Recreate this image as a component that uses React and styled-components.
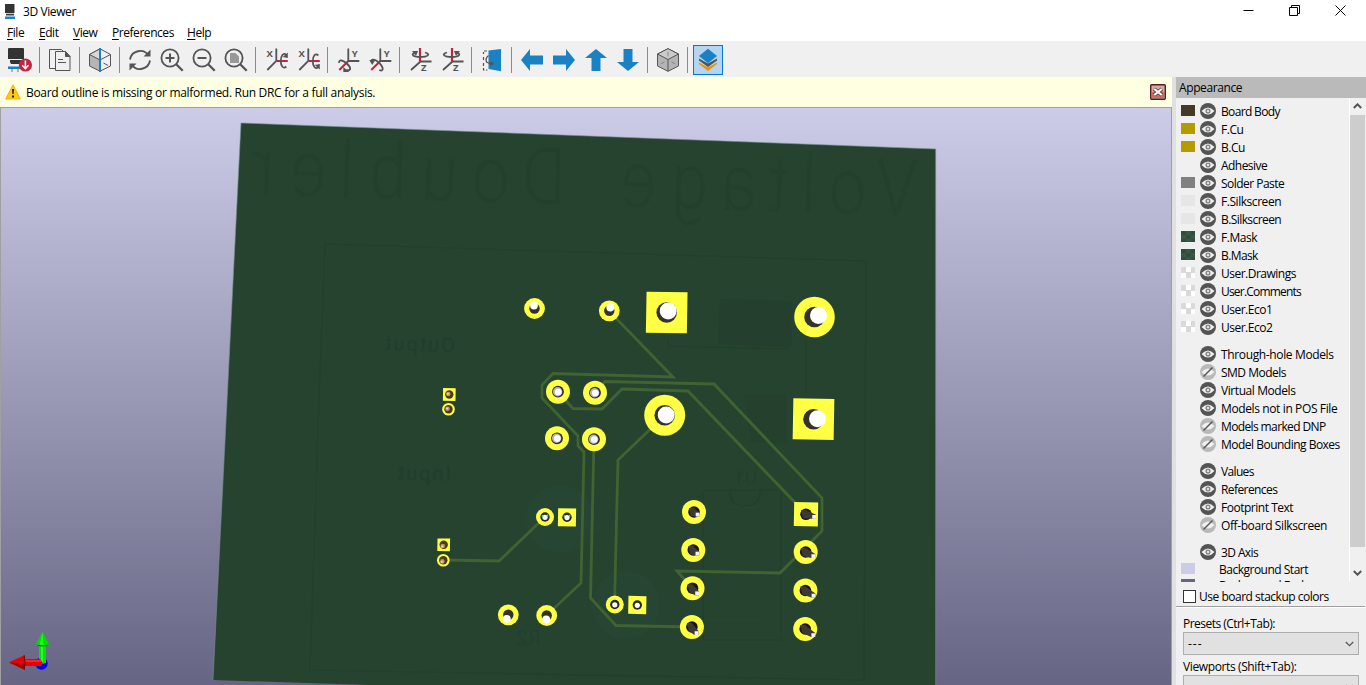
import React from "react";
import styled, { createGlobalStyle } from "styled-components";

const Global = createGlobalStyle`
  * { box-sizing: border-box; }
  html, body { margin: 0; padding: 0; overflow: hidden; }
  body { font-family: "Open Sans", "Noto Sans", sans-serif; font-size: 12px; color: #000; }
`;

const Window = styled.div`
  width: 1366px;
  height: 685px;
  display: flex;
  flex-direction: column;
  background: #fff;
  overflow: hidden;
`;
const TitleBar = styled.header`
  height: 23px;
  flex: none;
  display: flex;
  align-items: center;
  padding: 0 19px 0 4px;
`;
const Title = styled.span`
  flex: 1;
  margin-left: 6px;
  line-height: 23px;
  letter-spacing: -0.4px;
`;
const WindowButtons = styled.div`
  display: flex;
  gap: 33px;
  padding-bottom: 3px;
`;
const MenuBar = styled.nav`
  height: 18px;
  flex: none;
  display: flex;
  padding-left: 7px;
  line-height: 19px;
`;
const MenuItem = styled.span`
  width: ${(p) => p.$w}px;
  white-space: nowrap;
  letter-spacing: -0.45px;
`;
const Key = styled.u`
  text-underline-offset: 2px;
`;
const ToolBar = styled.div`
  height: 36px;
  flex: none;
  display: flex;
  align-items: center;
  padding: 2px 0 0 4px;
  background: #f0f0f0;
`;
const Tool = styled.div`
  width: 30px;
  height: 30px;
  margin: 0 1px;
  display: flex;
  align-items: center;
  justify-content: center;
  border: 1px solid ${(p) => (p.$on ? "#0078d7" : "transparent")};
  background: ${(p) => (p.$on ? "#b3d5f2" : "transparent")};
  svg { overflow: visible; }
`;
const Separator = styled.div`
  width: 1px;
  height: 26px;
  margin: 0 4px 0 3px;
  background: #8c8c8c;
`;
const Main = styled.div`
  flex: 1;
  min-height: 0;
  display: flex;
`;
const Viewer = styled.main`
  width: 1172px;
  display: flex;
  flex-direction: column;
`;
const InfoBar = styled.div`
  height: 30px;
  width: 1171px;
  flex: none;
  display: flex;
  align-items: center;
  background: #ffffe1;
  padding: 0 5px 0 5px;
`;
const InfoText = styled.span`
  flex: 1;
  margin-left: 5px;
  letter-spacing: -0.3px;
`;
const Viewport = styled.div`
  flex: 1;
  min-height: 0;
  border: 1px solid #a0a0a0;
  border-bottom: 0;
  background: linear-gradient(#cccce8, #666684);
  svg { display: block; }
`;
const Side = styled.aside`
  flex: 1;
  border-left: 4px solid #e0e0e0;
  background: #f0f0f0;
  display: flex;
  flex-direction: column;
`;
const SideTitle = styled.div`
  height: 21px;
  flex: none;
  background: #bababa;
  padding-left: 3px;
  line-height: 21px;
  letter-spacing: -0.4px;
`;
const ListArea = styled.div`
  height: 484px;
  flex: none;
  display: flex;
`;
const List = styled.div`
  width: 173px;
  height: 484px;
  overflow: hidden;
  padding: 4px 0 0 5px;
`;
const Row = styled.div`
  height: ${(p) => (p.$plain ? 16 : 18)}px;
  margin-top: ${(p) => (p.$gap ? 9 : 0)}px;
  display: flex;
  align-items: center;
  white-space: nowrap;
`;
const Swatch = styled.i`
  width: 14px;
  height: 11px;
  flex: none;
  margin: 0 5px 1px 0;
`;
const RowLabel = styled.span`
  margin-left: ${(p) => (p.$plain ? 19 : 5)}px;
  padding-top: 1px;
  line-height: 16px;
  letter-spacing: ${(p) => p.$ls ?? -0.45}px;
`;
const ScrollBar = styled.div`
  width: 16px;
  border-left: 1px solid #fff;
  display: flex;
  flex-direction: column;
  justify-content: space-between;
  align-items: center;
  background: #f0f0f0;
`;
const ScrollArrow = styled.div`
  height: ${(p) => p.$h}px;
  display: flex;
  align-items: flex-end;
  padding-bottom: 6px;
`;
const Thumb = styled.div`
  width: 15px;
  height: 432px;
  background: #cdcdcd;
`;
const Stackup = styled.div`
  height: 24px;
  flex: none;
  display: flex;
  align-items: center;
  gap: 3px;
  padding: 5px 0 0 7px;
  letter-spacing: -0.48px;
`;
const Check = styled.i`
  width: 13px;
  height: 13px;
  border: 1px solid #333;
  background: #fff;
`;
const Rule = styled.div`
  height: 2px;
  flex: none;
  margin-right: 1px;
  border-top: 1px solid #a0a0a0;
  background: #fff;
`;
const FieldLabel = styled.div`
  height: ${(p) => p.$h}px;
  flex: none;
  padding: ${(p) => p.$top}px 0 0 7px;
  line-height: 16px;
  letter-spacing: ${(p) => p.$ls}px;
`;
const Select = styled.div`
  height: 23px;
  flex: none;
  margin: 0 7px;
  border: 1px solid #adadad;
  background: #e1e1e1;
  display: flex;
  align-items: center;
  justify-content: space-between;
  padding: 0 4px;
  letter-spacing: 1px;
`;

const INK = "#545454";
const RED = "#bf2641";
const BLUE = "#1a81c4";

const Svg = ({ s = 24, left = 0, children, ...r }) => (
  <svg width={s} height={s} viewBox={`${-left} 0 24 24`} fill="none" stroke={INK} strokeWidth="1.8" {...r}>
    {children}
  </svg>
);

const AppIcon = () => (
  <svg width="13" height="16" viewBox="0 0 13 16">
    <path d="M1 0h9.500v9H1z" fill="#333" />
    <path d="M2 9.700h8v1.800H2z" fill="#3d3d3d" />
    <path d="M1 12.500h10v2.500H1z" fill={BLUE} />
  </svg>
);
const Reload = () => (
  <Svg stroke="none">
    <path d="M0 0.500Q0 0 1 0h14q1 0 1 1v10H0z" fill="#333" />
    <path d="M2 12h13v2l-1 2H3l-1-2z" fill="#333" />
    <path d="M0 17h16v1H0z" fill="#eee" />
    <path d="M0 18.500h12V21H0z" fill={BLUE} />
    <path d="M4 21v3M10 21v3" stroke="#aaa" />
    <circle cx="17.400" cy="17" r="6.600" fill={RED} />
    <path d="M17.400 12.600v7.600M14.200 17.300l3.200 3.300 3.200-3.300" stroke="#fff" strokeWidth="1.500" />
  </Svg>
);
const Copy = () => (
  <Svg strokeWidth="1" left={1}>
    <path d="M6.500 20.500h-6v-19h12l2 2" />
    <path d="M6.500 3.500h10l4.500 5v14h-14.500z" />
    <path d="M16.500 3.500v5h4.500z" fill={INK} />
    <path d="M9 11.500h5M9 14.500h8" strokeWidth="1.200" />
  </Svg>
);
const Raytrace = () => (
  <Svg strokeWidth="1">
    <path d="M12 .8 1.500 6.500v11.500L12 23.200z" fill="#b5b5b5" />
    <path d="M12 .8 1.500 6.500 12 12z" fill="#d8d8d8" />
    <path d="M12 .8l10.500 5.700v11.500L12 23.200M12 12l10.500-5.500M15.500 15l4.500 2.500" />
    <path d="M12 0v24" stroke={BLUE} strokeWidth="2" />
  </Svg>
);
const Refresh = () => (
  <Svg>
    <path d="M2 11.500A10.200 10.200 0 0 1 20.500 7.500M22 12.500A10.200 10.200 0 0 1 3.500 16.500" />
    <path d="M22.500 1.500v7h-7zM1.500 22.500v-7h7z" fill={INK} stroke="none" />
  </Svg>
);
const Lens = ({ kind }) => (
  <Svg>
    <circle cx="10" cy="10" r="8.600" />
    <path d="M16.200 16.200l6.500 6.500" strokeWidth="2.300" />
    {kind === "page" ? (
      <path d="M6 5h5.500l3.500 3.500V15H6z" fill="#999" stroke="none" />
    ) : (
      <path d={kind === "in" ? "M5.500 10h9M10 5.500v9" : "M5.500 10h9"} strokeWidth="2" />
    )}
  </Svg>
);
const AxisLetter = ({ x, y, children }) => (
  <text x={x} y={y} fill={INK} stroke="none" fontFamily="Open Sans" fontWeight="700" fontSize="9.500">
    {children}
  </text>
);
const RotX = ({ flip }) => (
  <Svg left={1.3}>
    <path d="M11 0.500v12.500L2 22" />
    <path d="M11 13h11.500" stroke={RED} strokeWidth="2" />
    <AxisLetter x="1.300" y="9">X</AxisLetter>
    <g transform={flip ? "matrix(1 0 0 -1 0 26)" : undefined}>
      <path d="M21 7C18 4 15.500 8 15.500 13s2.500 8.500 5.500 5.500" />
      <path d="M17.500 9l5 1V4.500z" fill={INK} stroke="none" />
    </g>
  </Svg>
);
const RotY = ({ flip }) => (
  <Svg left={1.300}>
    <path d="M11 0.500v12.500h11" />
    <path d="M11 13l-9 9" stroke={RED} strokeWidth="2" />
    <AxisLetter x="14.500" y="9">Y</AxisLetter>
    <path d={flip ? "M3 15c-3-4 2-5 7 0s4 9 0 7" : "M2 15c-1-4 4-3 8 1s4 7-1 6"} />
    <path d={flip ? "M0 12h6l-3 5z" : "M6 19v5h6z"} fill={INK} stroke="none" />
  </Svg>
);
const RotZ = ({ flip }) => (
  <Svg left={1}>
    <path d="M22.500 13.500h-11L2 22" />
    <path d="M11 0v13.500" stroke={RED} strokeWidth="2.200" />
    <AxisLetter x="12" y="23.300">Z</AxisLetter>
    <g transform={flip ? "matrix(-1 0 0 1 22 0)" : undefined}>
      <path d="M6 4.500C2 6 3 9 11 9s11-3 5-4.500" />
      <path d="M3 3l6 0-2 5z" fill={INK} stroke="none" />
    </g>
  </Svg>
);
const Flip = () => (
  <Svg left={1}>
    <path d="M6 3H2.500v3M2.500 9v3M2.500 15v3M2.500 20v2h4" strokeDasharray="3 1.500" strokeWidth="1.200" />
    <path d="M7.500 2.500 20 1v22.200L7.500 21z" fill={BLUE} stroke="none" />
    <path d="M7.500 7.500q-3.500 3-2 6.500 2.500 2 7 2" strokeWidth="1.300" />
    <path d="M9 13.500l4 1.500-4 3z" fill={INK} stroke="none" />
  </Svg>
);
const Arrow = ({ turn }) => (
  <Svg stroke="none">
    <path d="M1 12 10 1v6.500h13v9H10V23z" fill={BLUE} transform={`rotate(${turn} 12 12)`} />
  </Svg>
);
const Cube = () => (
  <Svg strokeWidth="1">
    <path d="M12 .7 22.500 6v12L12 23.300 1.500 18V6z" fill="#b4b4b4" />
    <path d="M12 .7 22.500 6 12 11.500 1.500 6z" fill="#cbcbcb" />
    <path d="M12 11.500v11.800" />
    <path d="M12 3.500v5M4.500 16l4-2M19.500 16l-4-2" stroke="#888" />
  </Svg>
);
const Layers = () => (
  <Svg stroke="none">
    <path d="M3 14.500l9 5 9-5v1.500L12 23l-9-7z" fill="#f29100" />
    <path d="M3 10.500l9 5 9-5v2L12 19l-9-6.500z" fill={INK} />
    <path d="M12 .8 21 8 12 15.200 3 8z" fill={BLUE} />
  </Svg>
);
const Eye = ({ off }) => (
  <svg width="16" height="16" viewBox="0 0 16 16">
    <circle cx="8" cy="8" r="8" fill={off ? "#b9b9b9" : INK} />
    <path d="M1.500 8Q8 0.800 14.500 8 8 15.200 1.500 8z" fill="#f0f0f0" />
    {off ? (
      <path d="M3.500 12.500l9-9" stroke={INK} strokeWidth="1.400" />
    ) : (
      <circle cx="8" cy="8" r="1.900" fill="#e0e0e0" stroke="#808080" strokeWidth="1.300" />
    )}
  </svg>
);
const Chevron = ({ up }) => (
  <svg width="9" height="6" viewBox="0 0 9 6" fill="none" stroke="#555" strokeWidth={up === undefined ? 1.2 : 2}>
    <path d={up ? "M.8 5 4.500 1.300 8.200 5" : "M.8 1 4.500 4.700 8.200 1"} />
  </svg>
);
const Warning = () => (
  <svg width="16" height="16" viewBox="0 0 16 16">
    <path d="M8 .8 15.300 15H.7z" fill="#fcc81c" stroke="#f5b400" strokeLinejoin="round" />
    <path d="M7 5h2l-.4 5H7.400zM7 11.500h2v2H7z" fill="#222" />
  </svg>
);
const CloseInfo = () => (
  <svg width="16" height="16" viewBox="0 0 16 16">
    <rect x=".7" y=".7" width="14.600" height="14.600" rx="1" fill="#e3a49b" stroke="#4d2024" strokeWidth="1.400" />
    <path d="M2 8h12v6H2z" fill="#cf6c60" />
    <path d="M4 5l8 6M12 5l-8 6" stroke="#5b4545" strokeWidth="4" />
    <path d="M4.300 5l7.400 6M11.700 5l-7.400 6" stroke="#fff" strokeWidth="2.200" />
  </svg>
);

const TOOLS = [
  <Reload />, null, <Copy />, null, <Raytrace />, null,
  <Refresh />, <Lens kind="in" />, <Lens kind="out" />, <Lens kind="page" />, null,
  <RotX />, <RotX flip />, null, <RotY />, <RotY flip />, null, <RotZ />, <RotZ flip />, null,
  <Flip />, null, <Arrow turn={0} />, <Arrow turn={180} />, <Arrow turn={90} />, <Arrow turn={270} />, null,
  <Cube />, null, <Layers />,
];

const SILK = [
  ["V", 896], ["o", 847], ["l", 808], ["t", 777], ["a", 738], ["g", 689], ["e", 638],
  ["D", 543], ["o", 490], ["u", 439], ["b", 387], ["l", 346], ["e", 308], ["r", 262],
];
const TRACES = [
  "609,311 673,377 553,373.500 542,385 542,398 578,436 578,446 584,452 581,583 547,615",
  "558,392 573,408.500 602,409 622,389 688,391 806,514",
  "595,393 605,381.500 714,384 822,498 822,531 780,573 677,571 692,588",
  "594,439 590.500,598 616,625.500 692,627",
  "665,415 618,460 614.500,604",
  "545,517 499,561 443,560",
];

const Pad = ({ x, y, r, sq, children }) => (
  <g transform={`translate(${x} ${y})`}>
    {sq ? (
      <rect x={-r} y={-r} width={2 * r} height={2 * r} fill="#ffff44" transform="rotate(1)" />
    ) : (
      <circle r={r} fill="#ffff44" />
    )}
    {children}
  </g>
);
const BigPad = ({ dx, dy = -1.5, ...p }) => (
  <Pad {...p}>
    <circle r="10.300" fill="#343231" />
    <circle r="8.500" fill="#fff" cx={dx} cy={dy} />
  </Pad>
);
const ResistorPad = ({ dx, dy, ...p }) => (
  <Pad r={10.4} {...p}>
    <circle r="5.200" fill="#33312d" />
    <circle r="3.900" fill="#fff" cx={dx} cy={dy} />
  </Pad>
);
const DiodePad = (p) => (
  <Pad r={12} {...p}>
    <circle r="5.900" fill="#33272d" />
    <circle r="4.700" fill="#b4b4c6" cx="-.4" />
    <circle r="3.300" fill="#fff" cx="0.300" cy="0.300" />
  </Pad>
);
const DipPad = ({ dx, dy, ...p }) => (
  <Pad r={12} {...p}>
    <circle r="5.800" fill="#161616" />
    <path d={`M-5 -4L0 -4 ${dx + 2} ${dy - 2} ${dx + 2} ${dy + 2} ${dx - 2} ${dy + 2} -3 4z`} fill="#3d3a36" />
    <rect x={dx - 1.8} y={dy - 1.8} width="3.800" height="3.800" fill="#f2f2f2" />
  </Pad>
);
const CapPad = ({ tint, ...p }) => (
  <Pad r={9} {...p}>
    <circle r="4.700" fill="#282828" />
    <circle r="2.600" fill="#fff" cy="0.300" />
    {tint && <path d="M-3.200 -1h1.500M1.800 -1.500h1.500" stroke="#6ac8cf" strokeWidth="2" />}
  </Pad>
);
const HeaderPad = ({ low, ...p }) => (
  <Pad r={6.3} {...p}>
    <circle r="4.200" fill="#4b3a1c" />
    <circle r="2.300" fill="#b99b66" cx="-1" cy={low ? 1.2 : -0.5} />
    <circle r="1" fill="#f3dfb8" cx="-1.500" cy={low ? 1.8 : -0.8} />
  </Pad>
);

const Board = () => (
  <svg width="1170" height="577" viewBox="1 108 1170 577">
    <polygon points="241,123 935.700,149 935.700,686 400,686 213,680" fill="#264330" />
    <path d="M213 680 241 123 935.700 149V685" fill="none" stroke="#7b8f92" strokeWidth=".6" />
    <g fill="none" stroke="#223e2b" strokeWidth="1.200" opacity=".7">
      <path d="M310 670 319 400 325 244 866 261 864 680 310 670" />
      <path d="M703 491l5-1h73v150h-78zM730 491q0 15 15 15t15-15M668 338v8l120 3M806 340v53" />
    </g>
    <path d="M720 299l70 2 3 4-2 20 1 17-3 5-71-3z" fill="#243f2d" />
    <path d="M744 394h43v50l-36-2z" fill="#25412e" />
    <circle cx="560" cy="519" r="34" fill="#264532" />
    <circle cx="626" cy="605" r="34" fill="#264532" />
    <g fill="none" stroke="#2a4a2c" strokeWidth="2">
      <path
        d="M545 322l45 45M452 435l78 70M478 565l30 30M530 587l60-50 100-100M620 507h140l70-66M700 620h60"
        opacity=".3"
      />
    </g>
    <g fill="#1f3a28" fontFamily="Roboto, sans-serif">
      {SILK.map(([c, x], i) => (
        <text
          key={i}
          fontSize="79"
          fontWeight="300"
          opacity=".32"
          textAnchor="middle"
          transform={`matrix(-.84 -.03 -.03 1 ${x} ${204 + (x - 550) * 0.033})`}
        >
          {c}
        </text>
      ))}
      <g opacity=".6">
        <text fontSize="20" letterSpacing="2" transform="matrix(-1 -.03 0 1 455 352)">Output</text>
        <text fontSize="20" letterSpacing="2" transform="matrix(-1 -.03 0 1 451 481)">Input</text>
      </g>
      <g opacity=".28">
        <text fontSize="21" transform="matrix(-1 -.03 0 1 541 645)">R2</text>
        <text fontSize="19" transform="matrix(-1 -.03 0 1 757 484)">U1</text>
      </g>
    </g>
    <g fill="none" stroke="#406332" strokeWidth="2.800">
      {TRACES.map((t) => <polyline key={t} points={t} />)}
    </g>
    <ResistorPad x={534.5} y={308.5} dx={-0.5} dy={-3} />
    <ResistorPad x={609.3} y={310.8} dx={1} dy={-3.3} />
    <ResistorPad x={508.3} y={614.8} dx={-1.5} dy={4} />
    <ResistorPad x={546.7} y={615.5} dx={-0.5} dy={4} />
    <BigPad x={666.7} y={312.5} r={20.5} sq dx={1.5} />
    <BigPad x={814.5} y={317} r={20.3} dx={4} />
    <BigPad x={664.7} y={415.2} r={20.5} dx={1.5} dy={-0.3} />
    <BigPad x={813.5} y={419.2} r={20.5} sq dx={4} dy={-0.5} />
    <DiodePad x={558} y={391.7} />
    <DiodePad x={595} y={392.7} />
    <DiodePad x={557} y={438.3} />
    <DiodePad x={594} y={439.2} />
    <DipPad x={694} y={512} dx={3.5} dy={2.5} />
    <DipPad x={693.3} y={550} dx={4} dy={3.5} />
    <DipPad x={692.5} y={588.2} dx={4.5} dy={5} />
    <DipPad x={691.9} y={627} dx={4.5} dy={6} />
    <DipPad x={806} y={514.3} sq dx={8} dy={2.5} />
    <DipPad x={805.7} y={552} dx={7.5} dy={4} />
    <DipPad x={805.4} y={590.5} dx={8} dy={5} />
    <DipPad x={805.2} y={629} dx={8} dy={6} />
    <CapPad x={545} y={517} tint />
    <CapPad x={567} y={517.3} sq tint />
    <CapPad x={614.8} y={604.5} />
    <CapPad x={637.3} y={605} sq />
    <HeaderPad x={449.3} y={394.5} sq />
    <HeaderPad x={448.5} y={409.3} />
    <HeaderPad x={443.7} y={544.8} sq low />
    <HeaderPad x={443.3} y={560.2} low />
    <g>
      <circle cx="41.500" cy="663.500" r="6.200" fill="#0606dc" />
      <path d="M39 645h7v18l-4 1-3-3z" fill="#00e300" />
      <path d="M41 645h2v18h-2z" fill="#2cff2c" />
      <path d="M42.500 632 50 646H35z" fill="#05d805" />
      <path d="M42.500 632l1 14h-4z" fill="#16ff16" />
      <path d="M35 644.500q7.500 4 15 0-7 1.500-15 0z" fill="#066b06" />
      <path d="M24 659h16l3 4-2 3H24z" fill="#e80000" />
      <path d="M24 660h17v2H24z" fill="#ff2525" />
      <path d="M9 662.300 25 655v15z" fill="#ea0000" />
      <path d="M9 662.500 25 664v6z" fill="#a80000" />
      <path d="M24 655.500q2 7 0 13.500" stroke="#5c0505" fill="none" />
    </g>
  </svg>
);

const mask = "conic-gradient(#3a5646 25%, #314d3d 0 50%, #3a5646 0 75%, #314d3d 0) 0 0 / 10px 8px";
const checker = "conic-gradient(#fff 25%, #d9d9d9 0 50%, #fff 0 75%, #d9d9d9 0) 0 0 / 10px 11px";
const ROWS = [
  { t: "Board Body", c: "#433b28", ls: -0.65 },
  { t: "F.Cu", c: "#b39b00" },
  { t: "B.Cu", c: "#b39b00" },
  { t: "Adhesive", ls: -0.55 },
  { t: "Solder Paste", c: "#808080", ls: -0.53 },
  { t: "F.Silkscreen", c: "#e6e6e6" },
  { t: "B.Silkscreen", c: "#e6e6e6", ls: -0.58 },
  { t: "F.Mask", c: mask },
  { t: "B.Mask", c: mask, ls: -0.6 },
  { t: "User.Drawings", c: checker, ls: -0.5 },
  { t: "User.Comments", c: checker, ls: -0.8 },
  { t: "User.Eco1", c: checker, ls: -0.5 },
  { t: "User.Eco2", c: checker, ls: -0.5 },
  { t: "Through-hole Models", gap: true, ls: -0.36 },
  { t: "SMD Models", off: true, ls: -0.5 },
  { t: "Virtual Models", ls: -0.42 },
  { t: "Models not in POS File", ls: -0.38 },
  { t: "Models marked DNP", off: true, ls: -0.62 },
  { t: "Model Bounding Boxes", off: true, ls: -0.51 },
  { t: "Values", gap: true, ls: -0.65 },
  { t: "References", ls: -0.58 },
  { t: "Footprint Text", ls: -0.48 },
  { t: "Off-board Silkscreen", off: true, ls: -0.4 },
  { t: "3D Axis", gap: true, ls: -0.6 },
  { t: "Background Start", c: "#cccce6", plain: true, ls: -0.5 },
  { t: "Background End", c: "#666684", plain: true, ls: -0.5 },
];

const MENUS = [["File", 32], ["Edit", 34], ["View", 39], ["Preferences", 75], ["Help", 40]];

export default function App() {
  return (
    <Window>
      <Global />
      <TitleBar>
        <AppIcon />
        <Title>3D Viewer</Title>
        <WindowButtons>
          <svg width="13" height="13" viewBox="0 0 13 13"><path d="M1.500 6.500h10" stroke="#000" /></svg>
          <svg width="13" height="13" viewBox="0 0 13 13" fill="none" stroke="#000">
            <path d="M1.500 3.500h8v8h-8zM3.500 3.500v-2h8v8h-2" />
          </svg>
          <svg width="13" height="13" viewBox="0 0 13 13" stroke="#000"><path d="M1.500 1.500l10 10M11.500 1.500l-10 10" /></svg>
        </WindowButtons>
      </TitleBar>
      <MenuBar>
        {MENUS.map(([m, w]) => (
          <MenuItem key={m} $w={w}><Key>{m[0]}</Key>{m.slice(1)}</MenuItem>
        ))}
      </MenuBar>
      <ToolBar>
        {TOOLS.map((t, i) => (t ? <Tool key={i} $on={i === TOOLS.length - 1}>{t}</Tool> : <Separator key={i} />))}
      </ToolBar>
      <Main>
        <Viewer>
          <InfoBar>
            <Warning />
            <InfoText>Board outline is missing or malformed. Run DRC for a full analysis.</InfoText>
            <CloseInfo />
          </InfoBar>
          <Viewport><Board /></Viewport>
        </Viewer>
        <Side>
          <SideTitle>Appearance</SideTitle>
          <ListArea>
            <List>
              {ROWS.map((r) => (
                <Row key={r.t} $gap={r.gap} $plain={r.plain}>
                  <Swatch style={{ background: r.c }} />
                  {!r.plain && <Eye off={r.off} />}
                  <RowLabel $plain={r.plain} $ls={r.ls}>{r.t}</RowLabel>
                </Row>
              ))}
            </List>
            <ScrollBar>
              <ScrollArrow $h={17}><Chevron up /></ScrollArrow>
              <Thumb />
              <ScrollArrow $h={35}><Chevron up={false} /></ScrollArrow>
            </ScrollBar>
          </ListArea>
          <Stackup><Check />Use board stackup colors</Stackup>
          <Rule />
          <FieldLabel $h={24} $top={8} $ls={-0.53}>Presets (Ctrl+Tab):</FieldLabel>
          <Select>--- <Chevron /></Select>
          <FieldLabel $h={20} $top={4} $ls={-0.38}>Viewports (Shift+Tab):</FieldLabel>
          <Select>--- <Chevron /></Select>
        </Side>
      </Main>
    </Window>
  );
}
